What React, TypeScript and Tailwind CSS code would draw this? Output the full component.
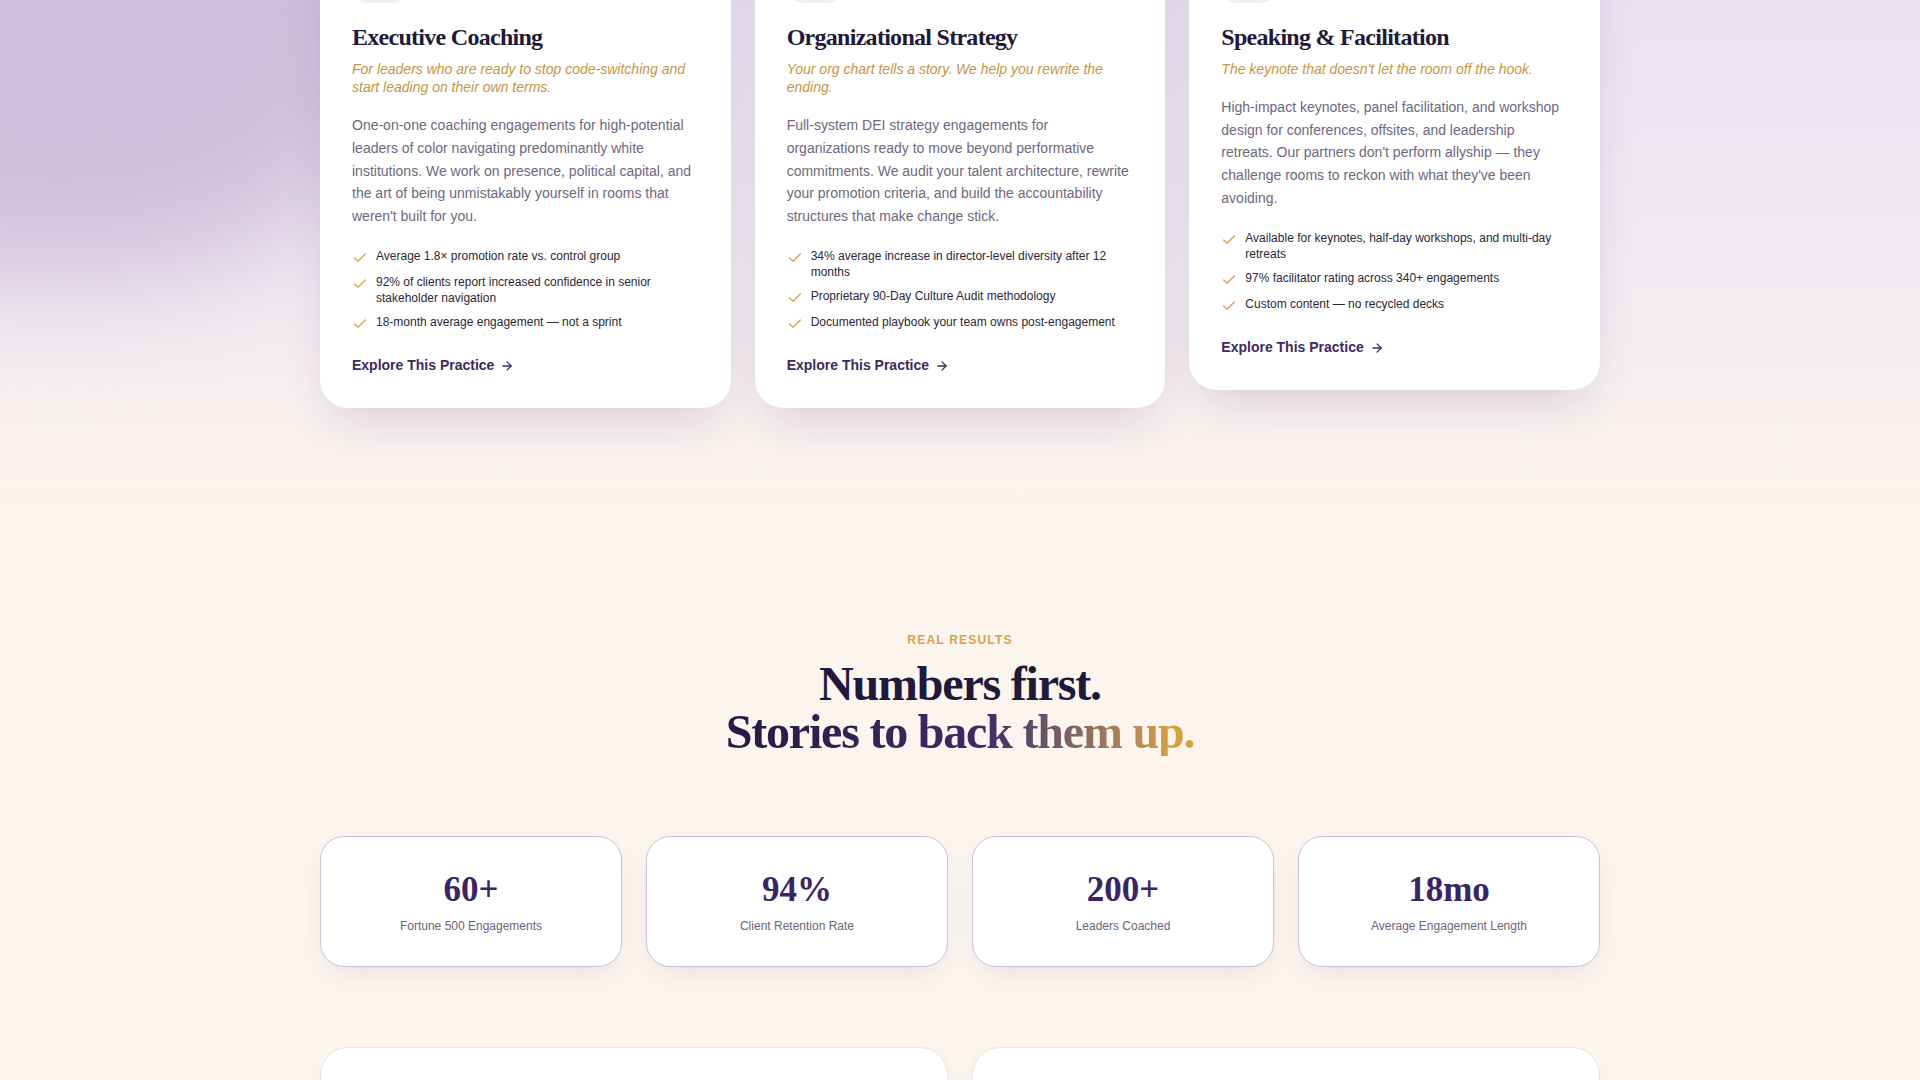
import React from "react";
import { Check, ArrowRight } from "lucide-react";

const practices = [
  {
    title: "Executive Coaching",
    tagline: "For leaders who are ready to stop code-switching and start leading on their own terms.",
    body: "One-on-one coaching engagements for high-potential leaders of color navigating predominantly white institutions. We work on presence, political capital, and the art of being unmistakably yourself in rooms that weren't built for you.",
    points: [
      "Average 1.8× promotion rate vs. control group",
      "92% of clients report increased confidence in senior stakeholder navigation",
      "18-month average engagement — not a sprint",
    ],
  },
  {
    title: "Organizational Strategy",
    tagline: "Your org chart tells a story. We help you rewrite the ending.",
    body: "Full-system DEI strategy engagements for organizations ready to move beyond performative commitments. We audit your talent architecture, rewrite your promotion criteria, and build the accountability structures that make change stick.",
    points: [
      "34% average increase in director-level diversity after 12 months",
      "Proprietary 90-Day Culture Audit methodology",
      "Documented playbook your team owns post-engagement",
    ],
  },
  {
    title: "Speaking & Facilitation",
    tagline: "The keynote that doesn't let the room off the hook.",
    body: "High-impact keynotes, panel facilitation, and workshop design for conferences, offsites, and leadership retreats. Our partners don't perform allyship — they challenge rooms to reckon with what they've been avoiding.",
    points: [
      "Available for keynotes, half-day workshops, and multi-day retreats",
      "97% facilitator rating across 340+ engagements",
      "Custom content — no recycled decks",
    ],
  },
];

const stats = [
  { value: "60+", label: "Fortune 500 Engagements" },
  { value: "94%", label: "Client Retention Rate" },
  { value: "200+", label: "Leaders Coached" },
  { value: "18mo", label: "Average Engagement Length" },
];

const sans = "font-['Liberation_Sans',Arial,sans-serif]";
const serif = "font-['Liberation_Serif','Times_New_Roman',serif]";

export default function App() {
  return (
    <div className={`relative h-[1080px] overflow-hidden bg-[#fcf5ee] ${sans}`}>
      <section className="relative bg-gradient-to-b from-[#e7dff0] via-[#f2ebf1] via-60% to-[#fcf5ee] pb-28">
        <div className="pointer-events-none absolute -left-[320px] -top-[300px] h-[660px] w-[760px] rounded-full bg-[#cdbfdb] blur-[60px]" />
        <div className="relative mx-auto grid max-w-[1280px] grid-cols-3 items-start gap-6 -mt-[85px]">
          {practices.map((p) => (
            <div
              key={p.title}
              className="rounded-[28px] bg-white px-8 pb-[31px] pt-8 shadow-[0_22px_50px_-14px_rgba(61,36,102,0.18)]"
            >
              <div className="mb-5 h-14 w-14 rounded-2xl bg-[#f1edf4]" />
              <h3
                className={`${serif} mb-2 text-[24px] font-bold leading-[1.2] tracking-[-0.03em] text-[#1f1a3b]`}
              >
                {p.title}
              </h3>
              <p className="mb-[18px] text-sm italic leading-[1.3] text-[#c8953f]">{p.tagline}</p>
              <p className="mb-5 text-sm leading-relaxed text-[#6e6880]">{p.body}</p>
              <ul className="flex flex-col gap-2">
                {p.points.map((pt) => (
                  <li key={pt} className="flex items-start gap-2 text-xs leading-4 text-[#2b2738]">
                    <Check size={16} strokeWidth={2} className="mt-0.5 shrink-0 text-[#d6a54a]" />
                    <span>{pt}</span>
                  </li>
                ))}
              </ul>
              <a
                href="#"
                className="mt-6 inline-flex items-center gap-1.5 text-sm font-bold leading-[1.4] text-[#3d2a5e]"
              >
                Explore This Practice
                <ArrowRight size={14} strokeWidth={2.2} />
              </a>
            </div>
          ))}
        </div>
      </section>

      <section className="pt-28">
        <div className="mx-auto max-w-[1280px]">
          <p className="mb-3 text-center text-xs font-bold uppercase leading-4 tracking-[0.1em] text-[#d4a24c]">
            Real Results
          </p>
          <h2
            className={`${serif} mb-20 text-center text-[48px] font-bold leading-none tracking-tight text-[#1f1a3d]`}
          >
            Numbers first.
            <br />
            <span className="inline-block bg-gradient-to-r from-[#241a45] via-[#3d2a68] via-55% to-[#d6a03e] to-95% bg-clip-text text-transparent">
              Stories to back them up.
            </span>
          </h2>

          <div className="grid grid-cols-4 gap-6">
            {stats.map((s) => (
              <div
                key={s.label}
                className="rounded-3xl border border-[#cdbfd9] bg-white pb-[32px] pt-[35px] text-center shadow-[0_10px_28px_-10px_rgba(61,36,102,0.14)]"
              >
                <div className={`${serif} text-[35px] font-bold leading-none text-[#3b2466]`}>{s.value}</div>
                <div className="mt-[11px] text-xs leading-4 text-[#6b6478]">{s.label}</div>
              </div>
            ))}
          </div>

          <div className="mt-20 grid grid-cols-2 gap-6">
            <div className="h-[240px] rounded-[28px] border border-[#ebe1e6] bg-white shadow-[0_10px_28px_-10px_rgba(61,36,102,0.1)]" />
            <div className="h-[240px] rounded-[28px] border border-[#ebe1e6] bg-white shadow-[0_10px_28px_-10px_rgba(61,36,102,0.1)]" />
          </div>
        </div>
      </section>
    </div>
  );
}
